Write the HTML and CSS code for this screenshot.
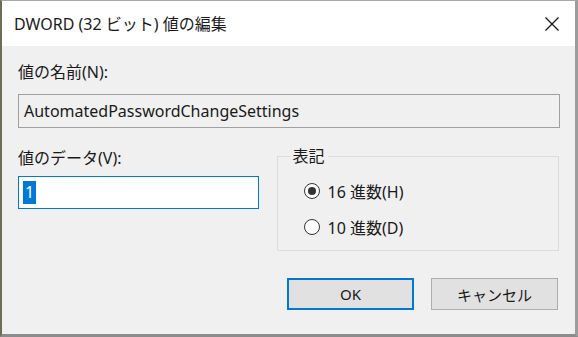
FILE: index.html
```html
<!DOCTYPE html>
<html lang="ja">
<head>
<meta charset="utf-8">
<link rel="stylesheet" href="styles.css">
</head>
<body>
<div class="window">
  <div class="titlebar">
    <span class="title">DWORD (32 ビット) 値の編集</span>
    <svg class="close" width="16" height="16" viewBox="0 0 16 16"><path d="M1.5 1.5 L14.5 14.5 M14.5 1.5 L1.5 14.5" stroke="#111" stroke-width="1.2" fill="none"/></svg>
  </div>
  <div class="content">
    <div class="label first">値の名前(N):</div>
    <div class="namebox">AutomatedPasswordChangeSettings</div>
    <div class="row">
      <div class="leftcol">
        <div class="label">値のデータ(V):</div>
        <div class="databox"><span class="sel">1</span></div>
      </div>
      <fieldset class="group">
        <legend>表記</legend>
        <div class="radio"><span class="circle checked"></span><span>16 進数(H)</span></div>
        <div class="radio"><span class="circle"></span><span>10 進数(D)</span></div>
      </fieldset>
    </div>
    <div class="buttons">
      <div class="btn default">OK</div>
      <div class="btn">キャンセル</div>
    </div>
  </div>
</div>
</body>
</html>
```
FILE: styles.css
```css
html, body {
  margin: 0;
  padding: 0;
  background: #f0f0f0;
}
.window {
  width: 578px;
  height: 337px;
  box-sizing: border-box;
  border-left: 2px solid #6f6c58;
  border-top: 1px solid #a8a8a8;
  border-right: 3px solid #9c9c9c;
  border-bottom: 3px solid #8c8c8c;
  background: #f0f0f0;
  font-family: "Noto Sans", "Noto Sans CJK JP", sans-serif;
  font-size: 16px;
  color: #1a1a1a;
  display: flex;
  flex-direction: column;
}
.titlebar {
  height: 45px;
  background: #fff;
  display: flex;
  align-items: center;
  justify-content: space-between;
  padding: 0 15px 0 12px;
  flex-shrink: 0;
}
.title {
  font-size: 16px;
  line-height: 20px;
}
.close {
  display: block;
}
.content {
  padding: 0 16px 0 16px;
  display: flex;
  flex-direction: column;
}
.label {
  line-height: 20px;
  height: 20px;
}
.label.first {
  margin-top: 16px;
}
.namebox {
  margin-top: 12px;
  height: 34px;
  box-sizing: border-box;
  border: 1px solid #a0a0a0;
  background: #f0f0f0;
  padding: 0 5px;
  line-height: 32px;
  width: 542px;
}
.row {
  display: flex;
  align-items: flex-start;
  margin-top: 20px;
  gap: 18px;
}
.leftcol {
  width: 241px;
  display: flex;
  flex-direction: column;
}
.databox {
  margin-top: 8px;
  height: 33px;
  box-sizing: border-box;
  border: 1px solid #0078d7;
  background: #fff;
  padding: 0 4px;
  display: flex;
  align-items: center;
}
.sel {
  background: #0078d7;
  color: #fff;
  line-height: 23px;
  padding: 0 2px;
}
.group {
  margin: -1px 0 0 0;
  width: 283px;
  height: 104px;
  box-sizing: border-box;
  border: 1px solid #dcdcdc;
  padding: 8px 0 0 26px;
  min-width: 0;
}
.group legend {
  padding: 0 3px;
  margin-left: -14px;
  line-height: 18px;
}
.radio {
  display: flex;
  align-items: center;
  gap: 8px;
  height: 36px;
}
.circle {
  width: 16px;
  height: 16px;
  box-sizing: border-box;
  border: 1px solid #333;
  border-radius: 50%;
  background: #fff;
  display: flex;
  align-items: center;
  justify-content: center;
}
.circle.checked::after {
  content: "";
  width: 8px;
  height: 8px;
  border-radius: 50%;
  background: #333;
}
.buttons {
  display: flex;
  justify-content: flex-end;
  gap: 17px;
  margin-top: 27px;
  padding-right: 1px;
  font-size: 15px;
}
.btn {
  width: 127px;
  height: 32px;
  box-sizing: border-box;
  border: 1px solid #adadad;
  background: #e1e1e1;
  display: flex;
  align-items: center;
  justify-content: center;
}
.btn.default {
  border: 2px solid #0078d7;
}
```
